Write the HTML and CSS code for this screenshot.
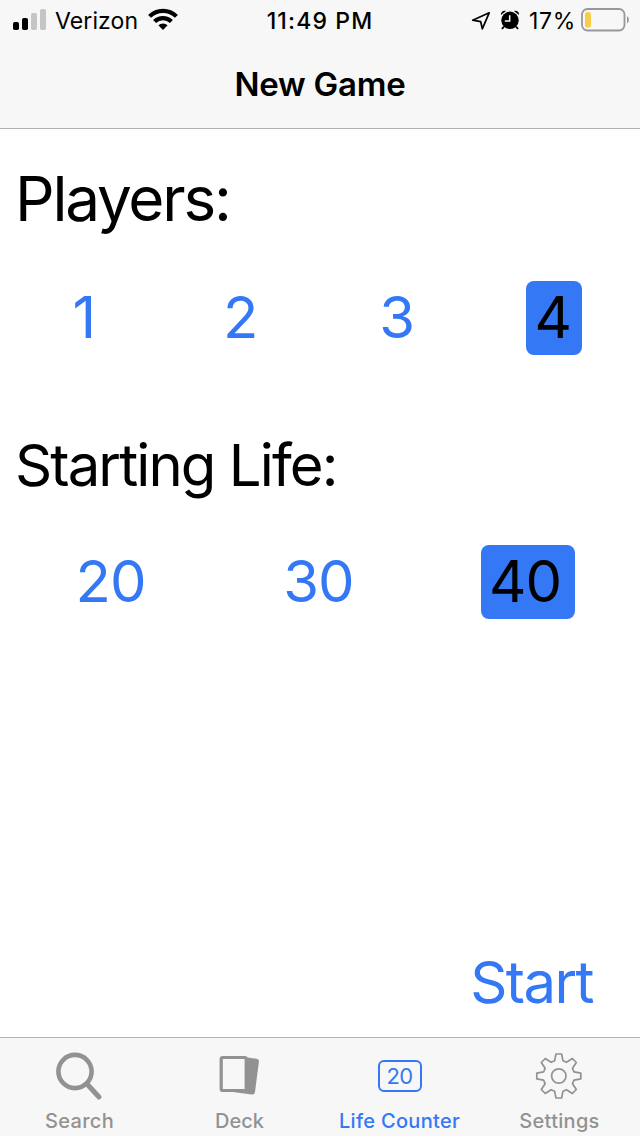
FILE: index.html
```html
<!DOCTYPE html>
<html lang="en">
<head>
<meta charset="utf-8">
<title>New Game</title>
<link rel="stylesheet" href="styles.css">
</head>
<body>
<div class="screen">
  <header class="top">
    <div class="status">
      <div class="status-left">
        <svg class="signal" width="34" height="22" viewBox="0 0 34 22">
          <rect x="0" y="13" width="6" height="8" rx="1.8" fill="#000"/>
          <rect x="9" y="9" width="6" height="12" rx="1.8" fill="#000"/>
          <rect x="18" y="4" width="6" height="17" rx="1.8" fill="#c5c5c6"/>
          <rect x="27" y="0" width="6" height="21" rx="1.8" fill="#c5c5c6"/>
        </svg>
        <span class="carrier">Verizon</span>
        <svg class="wifi" width="30" height="23" viewBox="0 0 30 23">
          <g fill="none" stroke="#000" stroke-width="4.2">
            <path d="M1.6 8.4a18.8 18.8 0 0 1 26.8 0"/>
            <path d="M6.6 13.6a12 12 0 0 1 16.8 0"/>
          </g>
          <path d="M15 22l-4.6-4.7a6.6 6.6 0 0 1 9.2 0z" fill="#000"/>
        </svg>
      </div>
      <span class="clock">11:49 PM</span>
      <div class="status-right">
        <svg class="location" width="20" height="20" viewBox="0 0 20 20">
          <path d="M1.700 9.200L18.200 1.800L11.300 17.800L9.700 10.700Z" fill="none" stroke="#000" stroke-width="1.7" stroke-linejoin="round"/>
        </svg>
        <svg class="alarm" width="20" height="20" viewBox="0 0 20 20">
          <circle cx="10" cy="10.300" r="8.700"/>
          <path d="M1 5C.6 2.200 3.200 -.2 6 .9ZM19 5C19.400 2.200 16.800 -.2 14 .9Z"/>
          <path d="M4 16.500L2 19M16 16.500L18 19" stroke="#000" stroke-width="2"/>
          <path d="M9.700 5.200v5.900H4.800" fill="none" stroke="#f7f7f7" stroke-width="1.500"/>
        </svg>
        <span class="percent">17%</span>
        <svg class="battery" width="49" height="24" viewBox="0 0 49 24">
          <rect x="1" y="1" width="42.5" height="21.5" rx="5.5" fill="none" stroke="#98989a" stroke-width="1.8"/>
          <path d="M46 8.3c2.6 1.3 2.6 5.700 0 7z" fill="#98989a"/>
          <rect x="4" y="4" width="6" height="15.500" rx="2.6" fill="#f7ce46"/>
        </svg>
      </div>
    </div>
    <h1 class="title">New Game</h1>
  </header>
  <main class="content">
    <h2 class="label players">Players:</h2>
    <div class="options four">
      <button class="option">1</button>
      <button class="option">2</button>
      <button class="option">3</button>
      <button class="option selected">4</button>
    </div>
    <h2 class="label life">Starting Life:</h2>
    <div class="options three">
      <button class="option">20</button>
      <button class="option">30</button>
      <button class="option selected">40</button>
    </div>
    <button class="start">Start</button>
  </main>
  <nav class="tabs">
    <a class="tab">
      <svg class="tab-icon" width="50" height="50" viewBox="0 0 50 50">
        <circle cx="20" cy="20.500" r="16.600" fill="none" stroke="#929292" stroke-width="4.600"/>
        <path d="M32 33L44 46" stroke="#929292" stroke-width="5" stroke-linecap="round"/>
      </svg>
      <span class="tab-label">Search</span>
    </a>
    <a class="tab">
      <svg class="tab-icon" width="50" height="50" viewBox="0 0 50 50">
        <path d="M32 6.300L42.500 7.700Q45.300 8.100 44.900 10.800L41 41Q40.500 44 37.600 43.500L15 40.500Z" fill="#929292"/>
        <rect x="7.200" y="6.500" width="25" height="33" rx="1.500" fill="#f7f7f7" stroke="#929292" stroke-width="3.200"/>
      </svg>
      <span class="tab-label deck">Deck</span>
    </a>
    <a class="tab active">
      <span class="tab-icon"><span class="life-icon">20</span></span>
      <span class="tab-label counter">Life Counter</span>
    </a>
    <a class="tab">
      <svg class="tab-icon" width="50" height="50" viewBox="0 0 50 50">
        <g transform="translate(-.7 .5)" fill="none" stroke="#929292" stroke-width="1.700" stroke-linejoin="round">
          <path d="M21.700 2.500H27.300L28.700 9.300L32.200 10.800L38 7L42 11L38.200 16.800L39.700 20.300L46.500 21.700V27.300L39.700 28.700L38.200 32.200L42 38L38 42L32.200 38.200L28.700 39.700L27.300 46.500H21.700L20.300 39.700L16.800 38.200L11 42L7 38L10.800 32.200L9.300 28.700L2.500 27.300V21.700L9.300 20.300L10.800 16.800L7 11L11 7L16.800 10.800L20.300 9.300Z"/>
          <circle cx="24.500" cy="24.500" r="7.200"/>
        </g>
      </svg>
      <span class="tab-label">Settings</span>
    </a>
  </nav>
</div>
</body>
</html>
```
FILE: styles.css
```css
* { box-sizing: border-box; }
body {
  margin: 0;
  font-family: Inter, "Liberation Sans", sans-serif;
  color: #000;
  background: #fff;
}
button {
  border: 0;
  padding: 0;
  background: none;
  font: inherit;
  color: #3478f6;
}
svg { display: block; flex: none; }
.screen {
  width: 640px;
  height: 1136px;
  display: flex;
  flex-direction: column;
  overflow: hidden;
}
.top {
  height: 129px;
  background: #f7f7f7;
  border-bottom: 1px solid #b2b2b2;
}
.status {
  height: 40px;
  display: grid;
  grid-template-columns: 220px 200px 220px;
  font-size: 23px;
  line-height: 40px;
  white-space: nowrap;
}
.status-left { display: flex; padding-left: 13px; }
.signal { margin-top: 9px; }
.carrier { margin-left: 8px; width: 93px; letter-spacing: 0.1px; padding-top: 1px; }
.wifi { margin-top: 8px; }
.clock { text-align: center; font-weight: 500; padding-top: 1px; letter-spacing: 1.15px; }
.status-right { display: flex; padding-left: 51px; }
.location { margin-top: 11px; }
.alarm { margin: 10px 0 0 9px; }
.percent { margin-left: 9px; width: 52px; padding-top: 1px; letter-spacing: 0.7px; }
.battery { margin-top: 8px; }
.title {
  margin: 0;
  font-size: 33px;
  font-weight: 600;
  line-height: 88px;
  text-align: center;
  letter-spacing: -0.25px;
}
.content {
  height: 908px;
  padding-top: 33px;
  display: flex;
  flex-direction: column;
}
.label {
  margin: 0 0 0 15px;
  font-weight: 400;
  line-height: 74px;
  white-space: nowrap;
}
.players { font-size: 62px; letter-spacing: -2.2px; }
.life { font-size: 58px; margin-top: 73px; letter-spacing: -1.9px; }
.options {
  display: grid;
  justify-items: center;
  font-size: 58px;
}
.four { grid-template-columns: repeat(4, 156.5px); margin: 45px 0 0 6px; }
.three { grid-template-columns: repeat(3, 208px); margin: 43px 0 0 8px; }
.option {
  height: 74px;
  line-height: 73px;
  padding-bottom: 1px;
}
.three .option { letter-spacing: -1px; padding-right: 3px; }
.selected {
  background: #3478f6;
  color: #000;
  border-radius: 8px;
}
.four .selected { width: 56px; padding-right: 1px; }
.three .selected { width: 94px; padding-right: 6px; }
.start {
  margin: auto 47px 18px auto;
  font-size: 58px;
  line-height: 74px;
  letter-spacing: -1.6px;
}
.tabs {
  height: 99px;
  background: #f7f7f7;
  border-top: 1px solid #b2b2b2;
  display: grid;
  grid-template-columns: 159px 160px 161px 159px;
  color: #929292;
}
.tab {
  display: flex;
  flex-direction: column;
  align-items: center;
  padding-top: 13px;
}
.tab-icon { width: 50px; height: 50px; display: flex; justify-content: center; }
.tab-label {
  font-size: 20px;
  font-weight: 500;
  line-height: 24px;
  margin-top: 8px;
  letter-spacing: 0.3px;
  white-space: nowrap;
}
.deck { letter-spacing: 0; padding-left: 1px; }
.active { color: #3478f6; }
.life-icon {
  flex: none;
  width: 44px;
  height: 32px;
  margin-top: 9px;
  border: 2px solid #3478f6;
  border-radius: 6px;
  font-size: 22px;
  line-height: 28px;
  text-align: center;
  letter-spacing: -0.6px;
}
```
